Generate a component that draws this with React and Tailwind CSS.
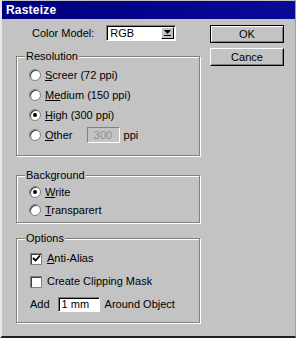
const font = { fontFamily: '"Liberation Sans", Arial, sans-serif' };

function Radio({ checked, label, u }) {
  return (
    <div className="flex items-center h-[20px]">
      <span className="relative w-[12px] h-[12px] rounded-full bg-white border border-[#808080] shadow-[inset_1px_1px_0_#404040] flex items-center justify-center">
        {checked && <span className="w-[4px] h-[4px] rounded-full bg-black" />}
      </span>
      <span className="ml-[4px]">
        <span className="underline">{label.slice(0, u)}</span>
        {label.slice(u)}
      </span>
    </div>
  );
}

function Check({ checked, label }) {
  return (
    <div className="flex items-center h-[23px]">
      <span className="w-[12px] h-[12px] bg-white border border-[#808080] shadow-[inset_1px_1px_0_#404040] flex items-center justify-center">
        {checked && (
          <svg width="9" height="9" viewBox="0 0 9 9">
            <path d="M1 4 L3.5 6.5 L8 1.5" stroke="#000" strokeWidth="1.8" fill="none" />
          </svg>
        )}
      </span>
      <span className="ml-[5px]">{label}</span>
    </div>
  );
}

function Group({ title, className, children }) {
  return (
    <div className={"relative border border-[#808080] shadow-[inset_1px_1px_0_#fff,1px_1px_0_#fff] " + className}>
      <span className="absolute -top-[8px] left-[8px] px-[1px] bg-[#c3c3c3] leading-[14px]">{title}</span>
      {children}
    </div>
  );
}

function Button({ children, def }) {
  return (
    <button
      className={
        "w-[74px] h-[18px] bg-[#c3c3c3] text-[11px] text-black flex items-center justify-center " +
        (def
          ? "border border-black shadow-[inset_1px_1px_0_#fff,inset_-1px_-1px_0_#808080]"
          : "border border-t-white border-l-white border-r-black border-b-black shadow-[inset_-1px_-1px_0_#808080]")
      }
    >
      {children}
    </button>
  );
}

export default function App() {
  return (
    <div style={font} className="w-[296px] h-[338px] bg-[#c3c3c3] text-[11px] text-black flex flex-col border-l-2 border-l-[#e8e8e8] border-b-2 border-b-[#202020] border-r border-r-[#a0a0a0] overflow-hidden">
      <div className="h-[18px] bg-gradient-to-r from-[#00007c] to-[#0a0a9a] flex items-center pl-[4px] mt-[1px]">
        <span className="text-white font-bold text-[12px] tracking-[0.2px]">Rasteize</span>
      </div>
      <div className="flex pt-[6px]">
        <div className="w-[198px] ml-[14px] flex flex-col">
          <div className="flex items-center h-[16px] pl-[16px]">
            <span>Color Model:</span>
            <div className="ml-[12px] w-[70px] h-[16px] bg-white border border-t-[#808080] border-l-[#808080] border-r-white border-b-white shadow-[inset_1px_1px_0_#000] flex items-center">
              <span className="ml-[3px] flex-1">RGB</span>
              <span className="w-[13px] h-[12px] mr-[1px] bg-[#c3c3c3] border border-t-white border-l-white border-r-black border-b-black flex flex-col items-center justify-center gap-[1px]">
                <svg width="7" height="4" viewBox="0 0 7 4"><path d="M0 0 H7 L3.5 4 Z" fill="#000" /></svg>
                <span className="w-[7px] h-[1px] bg-black" />
              </span>
            </div>
          </div>
          <Group title="Resolution" className="mt-[15px] w-[184px] h-[100px] pt-[8px] pl-[12px]">
            <Radio label="Screer (72 ppi)" u={1} />
            <Radio label="Medium (150 ppi)" u={2} />
            <Radio checked label="High (300 ppi)" u={1} />
            <div className="flex items-center h-[20px]">
              <Radio label="Other" u={1} />
              <div className="ml-[14px] w-[33px] h-[16px] bg-[#c3c3c3] border border-t-[#808080] border-l-[#808080] border-r-white border-b-white flex items-center justify-center text-[#909090]">
                300
              </div>
              <span className="ml-[4px]">ppi</span>
            </div>
          </Group>
          <Group title="Background" className="mt-[19px] w-[184px] h-[48px] pt-[7px] pl-[12px]">
            <div className="flex flex-col [&>div]:h-[18px]">
              <Radio checked label="Write" u={1} />
              <Radio label="Transparert" u={1} />
            </div>
          </Group>
          <Group title="Options" className="mt-[15px] w-[184px] h-[85px] pt-[8px] pl-[13px]">
            <Check checked label={<><span className="underline">A</span>nti-Alias</>} />
            <Check label="Create Clipping Mask" />
            <div className="flex items-center h-[23px]">
              <span>Add</span>
              <div className="ml-[8px] w-[42px] h-[15px] bg-white border border-t-[#808080] border-l-[#808080] border-r-white border-b-white shadow-[inset_1px_1px_0_#000] flex items-center pl-[3px]">
                1 mm
              </div>
              <span className="ml-[5px]">Around Object</span>
            </div>
          </Group>
        </div>
        <div className="ml-[-4px] flex flex-col gap-[5px]">
          <Button def>OK</Button>
          <Button>Cance</Button>
        </div>
      </div>
    </div>
  );
}
